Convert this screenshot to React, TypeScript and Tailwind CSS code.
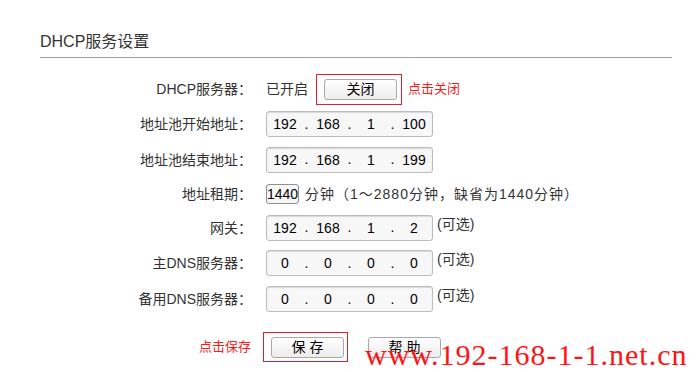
import React from "react";

const font = "font-['Liberation_Sans','Noto_Sans_CJK_SC',sans-serif]";

function IpBox({ parts }: { parts: string[] }) {
  return (
    <div className="flex h-[26px] w-[167px] items-center rounded-[3px] border border-[#bcbcbc] bg-[#f7f7f7] pl-px shadow-[inset_0_1px_1px_rgba(0,0,0,0.12)]">
      {parts.map((p, i) => (
        <React.Fragment key={i}>
          {i > 0 && <span className="w-[9px] text-center text-[14px] text-black">.</span>}
          <span className="w-[34px] text-center text-[14px] leading-[20px] text-black">{p}</span>
        </React.Fragment>
      ))}
    </div>
  );
}

function Btn({ label }: { label: string }) {
  return (
    <div className="flex h-[21px] w-[73px] items-center justify-center rounded-[3px] border border-[#a9a9a9] bg-gradient-to-b from-white to-[#ededed] text-[14px] leading-[20px] text-black">
      {label}
    </div>
  );
}

function Row({ label, h, children }: { label: string; h: string; children: React.ReactNode }) {
  return (
    <div className={`flex items-center ${h}`}>
      <div className="w-[212px] text-right text-[14px] leading-[20px] text-[#333]">{label}</div>
      <div className="ml-[14px] flex items-center">{children}</div>
    </div>
  );
}

function Optional() {
  return <span className="mb-[8px] ml-[4px] text-[14px] leading-[20px] text-[#333]">(可选)</span>;
}

export default function App() {
  return (
    <div className={`relative h-[372px] w-[699px] overflow-hidden bg-white ${font}`}>
      <div className="pl-[40px]">
        {/* title */}
        <div className="mt-[32px] w-[632px] border-b border-[#a0a0a0] pb-[5px]">
          <div className="h-[20px] text-[16px] leading-[20px] text-[#333]">DHCP服务设置</div>
        </div>

        <div className="mt-[14px]">
          <Row label="DHCP服务器：" h="h-[34px]">
            <span className="text-[14px] leading-[20px] text-[#333]">已开启</span>
            <div className="ml-[8px] flex h-[31px] w-[86px] items-center border border-[#e0202a] pl-[7px]">
              <Btn label="关闭" />
            </div>
            <span className="ml-[6px] text-[13px] leading-[20px] text-[#f52020]">点击关闭</span>
          </Row>
          <Row label="地址池开始地址：" h="h-[36px]">
            <IpBox parts={["192", "168", "1", "100"]} />
          </Row>
          <Row label="地址池结束地址：" h="h-[35px]">
            <IpBox parts={["192", "168", "1", "199"]} />
          </Row>
          <Row label="地址租期：" h="h-[33px]">
            <div className="flex h-[20px] w-[33px] items-center justify-center rounded-[3px] border border-[#8f8f8f] bg-[#f7f7f7] text-[14px] leading-[18px] text-black">
              1440
            </div>
            <span className="ml-[6px] text-[14px] leading-[20px] tracking-[1px] text-[#333]">分钟（1～2880分钟，缺省为1440分钟）</span>
          </Row>
          <Row label="网关：" h="h-[35px]">
            <IpBox parts={["192", "168", "1", "2"]} />
            <Optional />
          </Row>
          <Row label="主DNS服务器：" h="h-[36px]">
            <IpBox parts={["0", "0", "0", "0"]} />
            <Optional />
          </Row>
          <Row label="备用DNS服务器：" h="h-[36px]">
            <IpBox parts={["0", "0", "0", "0"]} />
            <Optional />
          </Row>
        </div>

        <div className="mt-[15px] flex items-center">
          <div className="w-[211px] text-right text-[13px] leading-[20px] text-[#f52020]">点击保存</div>
          <div className="ml-[12px] flex h-[30px] w-[85px] items-center border border-[#e0202a] pl-[7px]">
            <Btn label="保 存" />
          </div>
          <div className="ml-[20px]">
            <Btn label="帮 助" />
          </div>
        </div>
      </div>

      {/* watermark */}
      <div className="absolute left-[365px] top-[340px] whitespace-nowrap font-['Liberation_Serif',serif] text-[30px] leading-[30px] tracking-[1px] text-[#ff1414]">
        www.192-168-1-1.net.cn
      </div>
    </div>
  );
}
